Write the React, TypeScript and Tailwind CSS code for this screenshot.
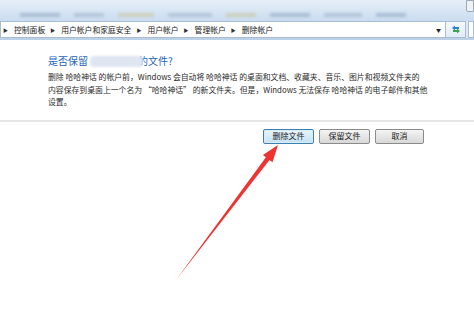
import React from 'react'

const crumbs = ['控制面板', '用户帐户和家庭安全', '用户帐户', '管理帐户', '删除帐户']

const Chrome = () => (
  <div className="h-[21px] bg-linear-to-b from-[#e6eff9] to-[#cadcef] relative overflow-hidden">
    <div className="flex gap-[14px] pt-[13px] pl-[20px] blur-[1.5px] opacity-60">
      <div className="w-[40px] h-[4px] bg-[#8fa6bf]" />
      <div className="w-[30px] h-[4px] bg-[#9fb3c8]" />
      <div className="w-[36px] h-[4px] bg-[#c9c49a]" />
      <div className="w-[44px] h-[4px] bg-[#9fb3c8]" />
      <div className="w-[30px] h-[4px] bg-[#c9c49a]" />
      <div className="w-[40px] h-[4px] bg-[#8fa6bf]" />
      <div className="w-[38px] h-[4px] bg-[#9fb3c8]" />
      <div className="w-[30px] h-[4px] bg-[#8fa6bf]" />
    </div>
    <div className="absolute right-0 top-0 w-[8px] h-[12px] border border-[#9aa8b8] bg-[#eef2f6] rounded-bl-[2px]" />
  </div>
)

const AddressBar = () => (
  <div className="h-[17px] flex bg-[#dce8f5]">
    <div className="w-[446px] flex items-center bg-white border border-[#a8bdd3] text-[7.8px] leading-none text-[#1a1a1a]">
      {crumbs.map((c) => (
        <div key={c} className="flex items-center">
          <span className="text-[5px] text-[#333] pl-[2px] pr-[6px]">▶</span>
          <span className="pr-[3px]">{c}</span>
        </div>
      ))}
      <span className="ml-auto mr-[4px] text-[5px] text-[#222]">▼</span>
    </div>
    <div className="w-[20px] flex items-center justify-center bg-linear-to-b from-[#f4f8fc] to-[#e2ecf6] border-y border-r border-[#a8bdd3]">
      <svg width="10" height="9" viewBox="0 0 10 9">
        <path d="M1 3 L4 0.5 L4 2 L8 2 L8 4 L4 4 L4 5.5 Z" fill="#2f7fd0" />
        <path d="M9 6 L6 8.5 L6 7 L2 7 L2 5 L6 5 L6 3.5 Z" fill="#3aa64a" />
      </svg>
    </div>
    <div className="w-[2px]" />
    <div className="flex-1 bg-white border border-[#a8bdd3]" />
  </div>
)

export default function App() {
  return (
    <div className="w-[474px] h-[310px] bg-white relative overflow-hidden font-['Noto_Sans_CJK_SC',sans-serif]">
      <Chrome />
      <AddressBar />
      <div className="h-[2px] bg-[#bcd0e6] blur-[0.5px]" />

      <div className="pl-[48px] pt-[15px]">
        <div className="flex items-center h-[12px] text-[10px] leading-[12px] text-[#2363bb]">
          <span>是否保留</span>
          <span className="relative z-10 ml-[2px] -mr-[5px] w-[53px] h-[11px] rounded-[4px] bg-[#dfe5f1] blur-[1px]" />
          <span>的文件?</span>
        </div>
        <div className="mt-[4px] text-[7.85px] leading-[12.5px] text-[#2b2b2b] whitespace-nowrap">
          <div>删除 哈哈神话 的帐户前，Windows 会自动将 哈哈神话 的桌面和文档、收藏夹、音乐、图片和视频文件夹的</div>
          <div>内容保存到桌面上一个名为 “哈哈神话” 的新文件夹。但是，Windows 无法保存 哈哈神话 的电子邮件和其他</div>
          <div>设置。</div>
        </div>
      </div>

      <div className="mt-[11px] h-[2px] bg-[#e6e6e6]" />

      <div className="mt-[7px] flex justify-end gap-[5px] pr-[50px] text-[8px] leading-none text-[#1a1a1a]">
        <button className="w-[51px] h-[15px] rounded-[2px] border border-[#3c7fb1] bg-linear-to-b from-[#e9f5fc] to-[#c2e2f5] shadow-[inset_0_0_0_1px_#d6ecfa]">
          删除文件
        </button>
        <button className="w-[51px] h-[15px] rounded-[2px] border border-[#8a8a8a] bg-linear-to-b from-[#f4f4f4] to-[#d8d8d8]">
          保留文件
        </button>
        <button className="w-[49px] h-[15px] rounded-[2px] border border-[#8a8a8a] bg-linear-to-b from-[#f4f4f4] to-[#d8d8d8]">
          取消
        </button>
      </div>

      <svg className="absolute left-0 top-0" width="474" height="310" viewBox="0 0 474 310">
        <polygon
          points="176,280 265.9,157.3 262.9,155 278,145 272.5,162.2 269.5,159.9"
          fill="#ee3330"
        />
      </svg>
    </div>
  )
}
